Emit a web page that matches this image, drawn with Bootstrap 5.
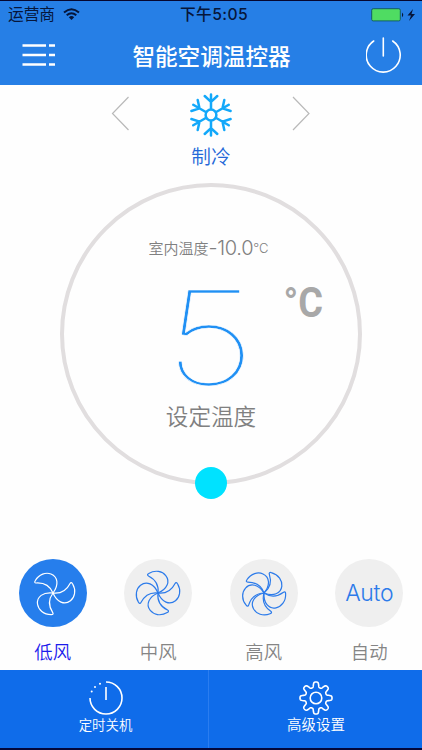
<!DOCTYPE html>
<html lang="zh-CN">
<head>
<meta charset="utf-8">
<meta name="viewport" content="width=device-width, initial-scale=1">
<title>智能空调温控器</title>
<link href="https://cdn.jsdelivr.net/npm/bootstrap@5.3.0/dist/css/bootstrap.min.css" rel="stylesheet">
<style>
body{font-family:Inter,"Noto Sans CJK SC",sans-serif;width:422px;height:750px;overflow:hidden;background:#fefefe;line-height:1}
svg{display:block;flex:none}
.app-head{height:85px;flex:none;background:#267fe6;border-top:1px solid #06072f}
.status-line{height:28px;font-size:15.7px;color:#06163a}
.status-line>div{flex:1 1 0}
.clock{font-weight:500;letter-spacing:.4px;padding-left:2px}
.title-line{height:54px;color:#fff}
.title-line h1{font-size:22.6px;font-weight:500;line-height:1;padding-top:3px}
.mode-area{height:98px}
.mode-name{font-size:19.7px;color:#2468d8;line-height:20px;font-weight:350;margin-top:10px}
.dial{width:302px;height:302px;border:4px solid #e1dedf}
.room{font-size:15px;color:#808080;height:22px;margin-top:50px;font-weight:350;margin-right:5px}
.room b{font-size:20px;font-weight:350;letter-spacing:-.3px}
.room small{font-size:13px}
.reading{height:146px;overflow:visible}
.set-label{font-size:22.6px;color:#808080;line-height:24px;font-weight:350}
.knob{width:32px;height:32px;background:#00e2ff;bottom:-18px;left:131px}
.fans{margin-top:74px}
.fan-disc{width:68px;height:68px;background:#efefef;color:#2c7bea}
.fan-disc.on{background:#267eec;color:#fff}
.fan-label{font-size:18.4px;color:#858585;line-height:20px;margin-top:15px;font-weight:350}
.fan-label.on{color:#1c1cec}
.auto-text{font-size:23px;font-weight:300;letter-spacing:-.3px}
.foot{height:80px;flex:none;background:#0f6cea;border-bottom:2px solid #03083c;color:#fff;font-size:13.4px;font-weight:350}
.foot-left{width:209px;border-right:1px solid #2a7df0;padding-left:3px}
.foot-right{font-size:14.5px;padding-left:1px}
.foot-text{padding-top:1px}
</style>
<script src="https://cdn.jsdelivr.net/npm/bootstrap@5.3.0/dist/js/bootstrap.bundle.min.js"></script>
</head>
<body class="d-flex flex-column">
<svg width="0" height="0" class="position-absolute"><defs>
<path id="blade" d="M0 0C-3-7-8-10.5-16.8-10C-18.4-9.9-18.6-11-17.8-12.3C-14-19-7-21-2-19C5-16.2 6-8 0 0Z"/>
<g id="arm"><path d="M0-6V-20.5M0-13.2L-6.3-19M0-13.2L6.3-19"/></g>
</defs></svg>
<header class="app-head d-flex flex-column">
  <div class="status-line d-flex align-items-center">
    <div class="d-flex align-items-center ps-2">运营商
      <svg class="ms-2" width="17" height="13" viewBox="0 0 17 13" fill="none" stroke="#06163a" stroke-width="2"><path d="M1 4.5Q8.5-2 16 4.5M3.7 7.3Q8.5 3.2 13.3 7.3"/><path d="M5.8 9.2Q8.5 7 11.2 9.2L8.5 12Z" fill="#06163a" stroke="none"/></svg>
    </div>
    <div class="text-center clock">下午5:05</div>
    <div class="d-flex justify-content-end align-items-center pe-1">
      <svg width="47" height="14" viewBox="0 0 47 14"><rect x=".7" y=".7" width="28.6" height="12.2" rx="1.5" fill="#4fdc62" stroke="#125c68"/><path d="M31 4.5Q33.5 6.8 31 9.2Z" fill="#06163a"/><path d="M42 1L36.5 7.5H40L38 13L44 6H40.5Z" fill="#06163a"/></svg>
    </div>
  </div>
  <div class="title-line d-flex align-items-center justify-content-between">
    <svg class="ms-4" width="33" height="24" viewBox="3.5 1 33 24" stroke="#fff" stroke-width="2.7" overflow="visible"><path d="M2 2.5H25.5M28.5 2.5H34.5M2 12H25.5M28.5 12H34.5M2 21.5H25.5M28.5 21.5H34.5"/></svg>
    <h1 class="m-0">智能空调温控器</h1>
    <svg class="me-3" width="40" height="40" viewBox="0 3 40 40" fill="none" stroke="#fff" stroke-width="1.6" stroke-linecap="round"><path d="M17.3 5V23M7.7 8A17 17 0 1 0 26.7 8"/></svg>
  </div>
</header>
<main class="flex-grow-1">
  <section class="mode-area d-flex justify-content-center">
    <svg class="mt-2" width="20" height="40" viewBox="-6.5 0 20 40" overflow="visible" fill="none" stroke="#b9b9b9" stroke-width="1.2"><path d="M18 4L2 20.5L18 37" /></svg>
    <div class="d-flex flex-column align-items-center mx-5 px-3">
      <svg class="mt-2" width="46" height="44" viewBox="-23 -22 46 44" fill="none" stroke="#12a8fa" stroke-width="2.5" stroke-linecap="round"><circle r="5.4"/><use href="#arm"/><use href="#arm" transform="rotate(60)"/><use href="#arm" transform="rotate(120)"/><use href="#arm" transform="rotate(180)"/><use href="#arm" transform="rotate(240)"/><use href="#arm" transform="rotate(300)"/></svg>
      <div class="mode-name">制冷</div>
    </div>
    <svg class="mt-2" width="20" height="40" viewBox="7 0 20 40" overflow="visible" fill="none" stroke="#b9b9b9" stroke-width="1.2"><path d="M2 4L18 20.5L2 37"/></svg>
  </section>
  <section class="dial rounded-circle mx-auto position-relative d-flex flex-column align-items-center">
    <div class="room d-flex align-items-center">室内温度<b>-10.0</b><small>°C</small></div>
    <svg class="reading" width="294" height="146" viewBox="0 0 294 146" font-family="Inter"><text x="101" y="126" font-size="131" font-weight="100" fill="#2090f4" stroke="#fefefe" stroke-width=".6" textLength="90" lengthAdjust="spacingAndGlyphs">5</text><text x="219.5" y="58" font-size="43" font-weight="700" fill="#a8a8a8" textLength="39.5" lengthAdjust="spacingAndGlyphs" font-family="Roboto">°C</text></svg>
    <div class="set-label">设定温度</div>
    <div class="knob rounded-circle position-absolute"></div>
  </section>
  <section class="fans row g-0 text-center">
    <div class="col d-flex flex-column align-items-center">
      <div class="fan-disc on rounded-circle d-flex align-items-center justify-content-center"><svg width="50" height="50" viewBox="-25 -25 50 50" fill="none" stroke="currentColor" stroke-width="1.2"><use href="#blade"/><use href="#blade" transform="rotate(120)"/><use href="#blade" transform="rotate(240)"/></svg></div>
      <div class="fan-label on">低风</div>
    </div>
    <div class="col d-flex flex-column align-items-center">
      <div class="fan-disc rounded-circle d-flex align-items-center justify-content-center"><svg width="50" height="50" viewBox="-25 -25 50 50" fill="none" stroke="currentColor" stroke-width="1.2"><g transform="rotate(30)"><use href="#blade"/><use href="#blade" transform="rotate(90)"/><use href="#blade" transform="rotate(180)"/><use href="#blade" transform="rotate(270)"/></g></svg></div>
      <div class="fan-label">中风</div>
    </div>
    <div class="col d-flex flex-column align-items-center">
      <div class="fan-disc rounded-circle d-flex align-items-center justify-content-center"><svg width="50" height="50" viewBox="-25 -25 50 50" fill="none" stroke="currentColor" stroke-width="1.2"><g transform="rotate(3)"><use href="#blade"/><use href="#blade" transform="rotate(72)"/><use href="#blade" transform="rotate(144)"/><use href="#blade" transform="rotate(216)"/><use href="#blade" transform="rotate(288)"/></g></svg></div>
      <div class="fan-label">高风</div>
    </div>
    <div class="col d-flex flex-column align-items-center">
      <div class="fan-disc rounded-circle d-flex align-items-center justify-content-center auto-text">Auto</div>
      <div class="fan-label">自动</div>
    </div>
  </section>
</main>
<footer class="foot d-flex">
  <div class="foot-left d-flex flex-column align-items-center">
    <svg class="mt-2" width="36" height="40" viewBox="-18 -20 36 40" fill="none" stroke="#fff" stroke-width="1.6"><path d="M0-16A16 16 0 1 1-16 0M0-11V2"/><g fill="#fff" stroke="none"><circle cx="-6" cy="-14.3" r="1"/><circle cx="-11" cy="-11" r="1"/><circle cx="-14.3" cy="-6.5" r="1"/></g></svg>
    <div class="foot-text">定时关机</div>
  </div>
  <div class="foot-right flex-grow-1 d-flex flex-column align-items-center">
    <svg class="mt-2" width="36" height="39" viewBox="-18 -20 36 39" fill="none" stroke="#fff" stroke-width="1.6" stroke-linejoin="round"><circle r="5.8"/><path id="gear"/></svg>
    <div class="foot-text">高级设置</div>
  </div>
</footer>
<script>
// Rounded cog outline with eight teeth
let d='';
for(let i=0;i<=240;i++){
  const a=i/240*2*Math.PI, w=Math.cos(8*a), r=13.4+2.6*Math.tanh(2*w)/Math.tanh(2);
  d+=(i?'L':'M')+(r*Math.cos(a)).toFixed(2)+' '+(r*Math.sin(a)).toFixed(2);
}
document.getElementById('gear').setAttribute('d',d+'Z');
</script>
</body>
</html>
